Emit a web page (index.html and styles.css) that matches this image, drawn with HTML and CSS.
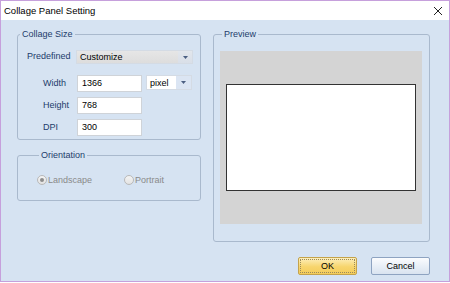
FILE: index.html
```html
<!DOCTYPE html>
<html>
<head>
  <meta charset="UTF-8">
  <link rel="stylesheet" href="styles.css">
</head>
<body>
  <div class="window">
    <div class="titlebar">
      <span class="title">Collage Panel Setting</span>
      <svg class="close" width="10" height="10" viewBox="0 0 10 10">
        <path d="M1 1 L9 9 M9 1 L1 9" stroke="#222" stroke-width="1" fill="none"/>
      </svg>
    </div>

    <div class="content">
      <div class="panels">
        <div class="left-col">
          <fieldset class="group size-group">
            <legend>Collage Size</legend>
            <div class="row row-predefined">
              <span class="label label-predefined">Predefined</span>
              <div class="combo combo-wide">
                <span class="combo-text">Customize</span>
                <span class="combo-btn">
                  <svg width="5" height="3" viewBox="0 0 5 3"><path d="M0 0 H5 L2.5 3 Z" fill="#4b5f82"/></svg>
                </span>
              </div>
            </div>
            <div class="row row-field first">
              <span class="label">Width</span>
              <div class="input">1366</div>
              <div class="combo combo-unit">
                <span class="combo-text">pixel</span>
                <span class="combo-btn">
                  <svg width="5" height="3" viewBox="0 0 5 3"><path d="M0 0 H5 L2.5 3 Z" fill="#4b5f82"/></svg>
                </span>
              </div>
            </div>
            <div class="row row-field">
              <span class="label">Height</span>
              <div class="input">768</div>
            </div>
            <div class="row row-field">
              <span class="label">DPI</span>
              <div class="input">300</div>
            </div>
          </fieldset>

          <fieldset class="group orient-group">
            <legend>Orientation</legend>
            <div class="radios">
              <div class="radio-item landscape">
                <span class="radio checked"></span>
                <span class="radio-label">Landscape</span>
              </div>
              <div class="radio-item">
                <span class="radio"></span>
                <span class="radio-label">Portrait</span>
              </div>
            </div>
          </fieldset>
        </div>

        <fieldset class="group preview-group">
          <legend>Preview</legend>
          <div class="preview-canvas">
            <div class="preview-page"></div>
          </div>
        </fieldset>
      </div>

      <div class="footer">
        <button class="btn btn-ok"><span class="btn-focus">OK</span></button>
        <button class="btn btn-cancel">Cancel</button>
      </div>
    </div>
  </div>
</body>
</html>
```

FILE: styles.css
```css
* {
  margin: 0;
  padding: 0;
  box-sizing: border-box;
}

body {
  background: #ffffff;
  font-family: 'Liberation Sans', Arial, sans-serif;
  font-size: 9px;
  color: #000000;
}

.window {
  width: 450px;
  height: 282px;
  border: 1px solid #c6a0dc;
  display: flex;
  flex-direction: column;
  background: #d6e3f2;
}

.titlebar {
  height: 19px;
  background: #ffffff;
  display: flex;
  align-items: center;
  justify-content: space-between;
  padding: 0 6px 0 3px;
}

.title {
  font-size: 9.5px;
  color: #000000;
}

.close {
  display: block;
}

.content {
  flex: 1;
  padding: 8px 19px 0 16px;
}

.panels {
  display: flex;
  gap: 12px;
  align-items: flex-start;
}

.left-col {
  width: 184px;
  display: flex;
  flex-direction: column;
  gap: 9px;
}

/* Group boxes */
.group {
  border: 1px solid #a9b9cd;
  border-radius: 3px;
  padding: 0;
  margin: 0;
  min-width: 0;
}

.group legend {
  margin-left: 2px;
  padding: 0 2px;
  line-height: 12px;
  font-size: 9px;
  color: #1d3c6b;
}

.size-group {
  padding-bottom: 3px;
}

.row {
  display: flex;
  align-items: center;
}

.row-predefined {
  margin-top: 10px;
  padding-left: 9px;
}

.label {
  color: #1d3c6b;
  padding-bottom: 2px;
}

.label-predefined {
  width: 49px;
}

.row-field {
  margin-top: 5px;
  padding-left: 25px;
}

.row-field.first {
  margin-top: 11px;
}

.row-field .label {
  width: 34px;
}

.input {
  width: 65px;
  height: 17px;
  background: #ffffff;
  border: 1px solid #cfd3d8;
  padding: 0 4px;
  line-height: 15px;
}

.combo {
  display: flex;
  align-items: stretch;
  border: 1px solid #d4dbe4;
}

.combo-text {
  flex: 1;
  padding-left: 3px;
  display: flex;
  align-items: center;
}

.combo-btn {
  width: 14px;
  display: flex;
  align-items: center;
  justify-content: center;
}

.combo-btn svg {
  display: block;
}

.combo-wide {
  width: 117px;
  height: 14px;
  background: linear-gradient(#e6e6e6, #dddddd);
}

.combo-wide .combo-btn {
  background: linear-gradient(#e2e6ec, #d9dfe8);
}

.combo-unit {
  width: 46px;
  height: 15px;
  margin-left: 4px;
  margin-top: -2px;
  background: #ffffff;
}

.combo-unit .combo-btn {
  width: 15px;
  background: #dbe5f3;
}

/* Orientation */
.orient-group {
  padding: 14px 0 15px 19px;
}

.radios {
  display: flex;
  align-items: center;
}

.radio-item {
  display: flex;
  align-items: center;
  gap: 1px;
  color: #8a8a8a;
}

.radio-item.landscape {
  width: 87px;
}

.radio {
  width: 10px;
  height: 10px;
  border-radius: 50%;
  border: 1px solid #b9b9b9;
  background: linear-gradient(#f4f4f4, #e2e2e2);
  display: flex;
  align-items: center;
  justify-content: center;
}

.radio.checked::after {
  content: "";
  width: 4px;
  height: 4px;
  border-radius: 50%;
  background: #8d8d8d;
}

/* Preview */
.preview-group {
  width: 217px;
  padding: 11px 6px 17px 6px;
}

.preview-canvas {
  width: 202px;
  height: 173px;
  background: #d4d4d4;
  display: flex;
  align-items: center;
  justify-content: center;
}

.preview-page {
  width: 190px;
  height: 107px;
  background: #ffffff;
  border: 1px solid #333333;
}

/* Buttons */
.footer {
  display: flex;
  justify-content: flex-end;
  gap: 14px;
  padding-top: 15px;
}

.btn {
  width: 59px;
  height: 18px;
  font-family: 'Liberation Sans', Arial, sans-serif;
  font-size: 9px;
  color: #000000;
  border-radius: 2px;
  display: flex;
  align-items: center;
  justify-content: center;
}

.btn-ok {
  border: 1px solid #c4a34c;
  background: linear-gradient(#fdefbc, #f7d56d 55%, #f4cc5a);
  padding: 1px;
}

.btn-focus {
  width: 100%;
  height: 100%;
  border: 1px dotted #9a8a5a;
  display: flex;
  align-items: center;
  justify-content: center;
}

.btn-cancel {
  border: 1px solid #8ea3c1;
  background: linear-gradient(#fbfcfe, #e9eff7 50%, #d9e3f0);
}
```
